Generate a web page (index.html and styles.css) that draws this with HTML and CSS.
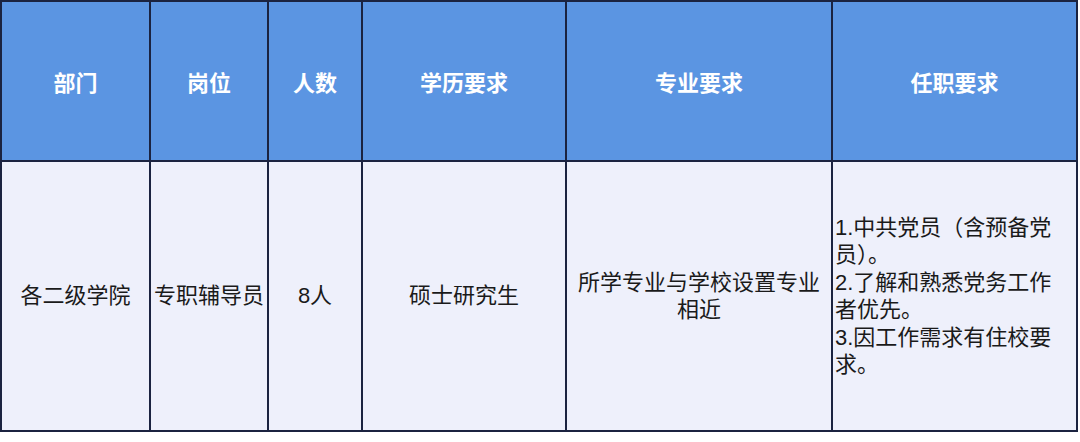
FILE: index.html
```html
<!DOCTYPE html>
<html lang="zh-CN">
<head>
<meta charset="utf-8">
<link rel="stylesheet" href="styles.css">
</head>
<body>
<table class="jobs">
  <colgroup>
    <col class="c1"><col class="c2"><col class="c3"><col class="c4"><col class="c5"><col class="c6">
  </colgroup>
  <thead>
    <tr>
      <th>部门</th>
      <th>岗位</th>
      <th>人数</th>
      <th>学历要求</th>
      <th>专业要求</th>
      <th>任职要求</th>
    </tr>
  </thead>
  <tbody>
    <tr>
      <td>各二级学院</td>
      <td class="tight">专职辅导员</td>
      <td>8人</td>
      <td>硕士研究生</td>
      <td class="major">所学专业与学校设置专业相近</td>
      <td class="req">1.中共党员（含预备党员）。<br>2.了解和熟悉党务工作者优先。<br>3.因工作需求有住校要求。</td>
    </tr>
  </tbody>
</table>
</body>
</html>
```

FILE: styles.css
```css
html, body {
  margin: 0;
  padding: 0;
  background: #ffffff;
}

body {
  font-family: "Liberation Sans", "Noto Sans CJK SC", sans-serif;
}

.jobs {
  border-collapse: collapse;
  table-layout: fixed;
  width: 1076px;
}

.c1 { width: 149px; }
.c2 { width: 118px; }
.c3 { width: 94px; }
.c4 { width: 204px; }
.c5 { width: 266px; }
.c6 { width: 245px; }

.jobs th,
.jobs td {
  border: 2px solid #1b2340;
  text-align: center;
  vertical-align: middle;
}

.jobs th {
  height: 158px;
  background: #5b95e2;
  color: #ffffff;
  font-size: 22px;
  font-weight: bold;
  padding: 0;
}

.jobs td {
  height: 268px;
  background: #eef0fb;
  color: #1a1a1a;
  font-size: 22px;
  line-height: 27.5px;
  padding: 0 6px;
}

.jobs td.tight {
  padding: 0;
}

.jobs td.major {
  padding: 0 8px;
}

.jobs td.req {
  text-align: left;
  padding: 0 4px 0 2px;
}
```
